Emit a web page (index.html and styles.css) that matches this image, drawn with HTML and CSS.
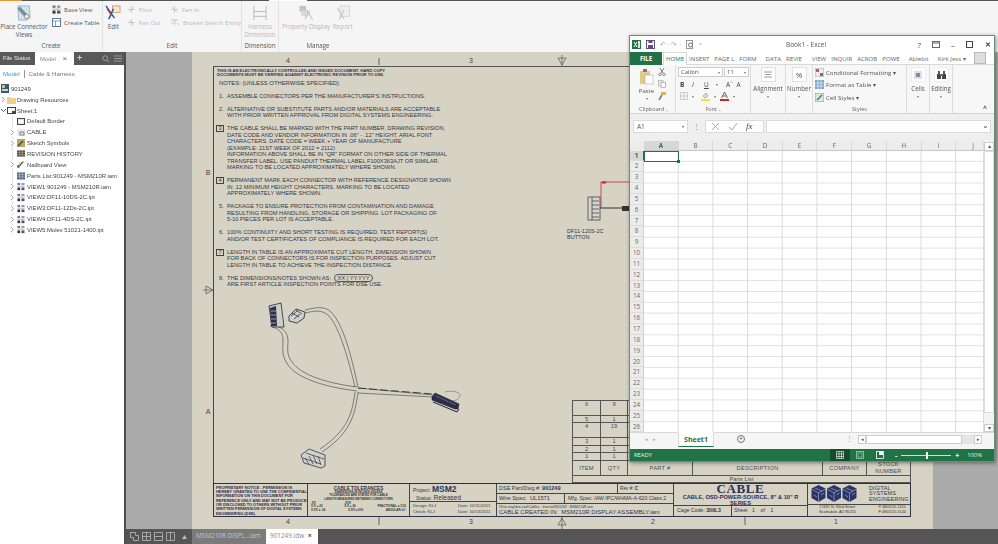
FILE: index.html
```html
<!DOCTYPE html>
<html lang="en">
<head>
<meta charset="utf-8">
<title>901249.idw</title>
<link rel="stylesheet" href="styles.css">
</head>
<body>
<svg class="defs" width="0" height="0">
  <symbol id="view" viewBox="0 0 9 9"><rect x="0.5" y="0.5" width="3" height="2.4" fill="#778"/><rect x="5" y="0.5" width="3.4" height="2.4" fill="#99a"/><rect x="0.5" y="3.6" width="8" height="1.2" fill="#bbc"/><rect x="0.5" y="5.6" width="3" height="3" fill="#334"/><rect x="5" y="5.6" width="3.4" height="3" fill="#556"/></symbol>
  <symbol id="chev" viewBox="0 0 5 7"><path d="M1 1l2.5 2.5L1 6" fill="none" stroke="#999" stroke-width=".9"/></symbol>
</svg>
<div class="app">
  <div class="topline"><i class="tl-orange"></i><i class="tl-dark a"></i><i class="tl-white"></i><i class="tl-dark b"></i></div>
  <header class="ribbon">
    <section class="rgroup create">
      <div class="rbody">
        <div class="bigbtn place">
          <svg width="16" height="16" viewBox="0 0 18 18"><path d="M2 1h13l1 13-4 3H3z" fill="#cfe3ea" stroke="#6fa0b0" stroke-width=".7"/><path d="M3 3l9 10" stroke="#7f8a90" stroke-width="4"/><circle cx="12" cy="13" r="2.6" fill="#eee" stroke="#666" stroke-width=".7"/></svg>
          <span>Place Connector<br>Views</span>
        </div>
        <div class="rstack">
          <div class="smallbtn"><svg width="9" height="9"><use href="#view"/></svg><span>Base View</span></div>
          <div class="smallbtn"><svg width="9" height="9" viewBox="0 0 9 9"><rect x=".5" y=".5" width="8" height="8" fill="#fff" stroke="#5b7a94"/><path d="M.5 3h8M3.5 3v5.5" stroke="#5b7a94" stroke-width=".7"/></svg><span>Create Table</span></div>
        </div>
      </div>
      <footer>Create</footer>
    </section>
    <section class="rgroup edit">
      <div class="rbody">
        <div class="bigbtn editbtn">
          <svg width="16" height="16" viewBox="0 0 17 17"><rect x="8" y="1" width="8" height="7" fill="#f1e6d0" stroke="#c2955a" stroke-width=".8"/><path d="M1 1l9 13M9 4l-5 11" stroke="#2f55a5" stroke-width="1.6"/><path d="M2 4l5 7" stroke="#c83a30" stroke-width="1.2"/></svg>
          <span>Edit</span>
        </div>
        <div class="rstack off">
          <div class="smallbtn"><svg width="9" height="9" viewBox="0 0 9 9"><path d="M4.5 1v7M1 4.5h7M2 7l5-5" stroke="#bbb" stroke-width=".7"/></svg><span>Pivot</span></div>
          <div class="smallbtn"><svg width="9" height="9" viewBox="0 0 9 9"><path d="M4.5 1v7M1 4.5h7M2 2l5 5" stroke="#bbb" stroke-width=".7"/></svg><span>Fan Out</span></div>
        </div>
        <div class="rstack off second">
          <div class="smallbtn"><svg width="9" height="9" viewBox="0 0 9 9"><path d="M4.5 1v7M1 4.5h7M2 2l2 2M7 7L5 5" stroke="#bbb" stroke-width=".7"/></svg><span>Fan In</span></div>
          <div class="smallbtn"><svg width="10" height="9" viewBox="0 0 10 9"><path d="M1 2h7M5 2v5M1 5h3M7 5l2 2" stroke="#bbb" stroke-width=".8"/></svg><span>Broken Sketch Entity</span></div>
        </div>
      </div>
      <footer>Edit</footer>
    </section>
    <section class="rgroup dimension">
      <div class="rbody">
        <div class="bigbtn off">
          <svg width="16" height="16" viewBox="0 0 17 17"><path d="M2 1v15M15 1v15M2 7h13M2 12h13" stroke="#a8a8a8" fill="none" stroke-width=".8"/></svg>
          <span>Harness<br>Dimension</span>
        </div>
      </div>
      <footer>Dimension</footer>
    </section>
    <section class="rgroup manage">
      <div class="rbody">
        <div class="bigbtn off prop">
          <svg width="16" height="16" viewBox="0 0 16 17"><rect x="1" y="1" width="7" height="6" fill="#c4c4c4"/><rect x="3" y="6" width="7" height="6" fill="#d8d8d8"/><path d="M9 5l6 11M7 15l5-9" stroke="#b5b5b5"/></svg>
          <span>Property Display</span>
        </div>
        <div class="bigbtn off">
          <svg width="16" height="16" viewBox="0 0 16 17"><rect x="5" y="1" width="10" height="11" fill="#eee" stroke="#ccc" stroke-width=".7"/><path d="M2 3l7 12M9 5l-5 11" stroke="#bbb"/></svg>
          <span>Report</span>
        </div>
      </div>
      <footer>Manage</footer>
    </section>
  </header>

  <div class="main">
    <aside class="browser">
      <div class="ptabs">
        <span class="ptab dark">File Status</span>
        <span class="ptab active">Model <b>×</b></span>
        <span class="ptab plus">+</span>
        <span class="ptools"><svg width="8" height="8" viewBox="0 0 8 8"><circle cx="3.2" cy="3.2" r="2.4" fill="none" stroke="#aaa" stroke-width=".8"/><path d="M5 5l2.5 2.5" stroke="#aaa" stroke-width=".8"/></svg><svg width="8" height="7" viewBox="0 0 8 7"><path d="M0 1h8M0 3.5h8M0 6h8" stroke="#aaa" stroke-width=".8"/></svg></span>
      </div>
      <div class="pswitch"><span class="blue">Model</span><i></i><span>Cable &amp; Harness</span></div>
      <ul class="tree">
        <li class="l0"><svg class="ic" width="8" height="9" viewBox="0 0 8 9"><rect width="8" height="9" fill="#3c5a72"/><rect x="1" y="1" width="3" height="3" fill="#d7c06a"/><rect x="1" y="5" width="6" height="2" fill="#c9d4dc"/></svg>901249</li>
        <li class="l1"><svg class="chev" width="5" height="7"><use href="#chev"/></svg><svg class="ic" width="9" height="8" viewBox="0 0 9 8"><path d="M0 1h3l1 1h5v6H0z" fill="#efd08a"/></svg>Drawing Resources</li>
        <li class="l1"><svg class="chev" width="5" height="7" viewBox="0 0 5 7"><path d="M0 2l2.5 2.5L5 2" fill="none" stroke="#444" stroke-width=".9"/></svg><svg class="ic" width="9" height="7" viewBox="0 0 9 7"><rect x=".5" y=".5" width="8" height="6" fill="#fff" stroke="#345"/><rect x="5" y="4" width="3" height="2" fill="#345"/></svg>Sheet:1</li>
        <li class="l2"><svg class="ic" width="8" height="7" viewBox="0 0 8 7"><rect x=".5" y=".5" width="7" height="6" fill="#e4e4e4" stroke="#444"/><rect x="2" y="2" width="4" height="3" fill="#fff"/></svg>Default Border</li>
        <li class="l2 arrow"><svg class="chev" width="5" height="7"><use href="#chev"/></svg><svg class="ic" width="8" height="7" viewBox="0 0 8 7"><rect width="8" height="7" fill="#e8ebee"/><rect x="3" y="3" width="4" height="3" fill="none" stroke="#556" stroke-width=".7"/></svg>CABLE</li>
        <li class="l2 arrow"><svg class="chev" width="5" height="7"><use href="#chev"/></svg><svg class="ic" width="8" height="8" viewBox="0 0 8 8"><rect width="8" height="8" fill="#b9a66e"/><path d="M1 7l5-5" stroke="#5c4a1c" stroke-width="1.4"/></svg>Sketch Symbols</li>
        <li class="l2"><svg class="ic" width="8" height="7" viewBox="0 0 9 7"><rect width="9" height="7" fill="#555"/><path d="M0 2.3h9M0 4.6h9M3 0v7M6 0v7" stroke="#c9b98d" stroke-width=".5"/></svg>REVISION HISTORY</li>
        <li class="l2 arrow"><svg class="chev" width="5" height="7"><use href="#chev"/></svg><svg class="ic" width="8" height="9" viewBox="0 0 9 9"><path d="M1 8l6-7" stroke="#445" stroke-width="1.6"/><path d="M6 1l2 2M2 3h2" stroke="#e3c23a" stroke-width="1.4"/><rect y="5" width="3" height="3" fill="#5b83b5"/></svg>Nailboard View</li>
        <li class="l2"><svg class="ic" width="8" height="8" viewBox="0 0 9 8"><rect width="9" height="8" fill="#4e6b86"/><path d="M0 2.5h9M0 5h9M3 0v8M6 0v8" stroke="#dfe6ec" stroke-width=".5"/></svg>Parts List:901249 - MSM210R.iam</li>
        <li class="l2 arrow"><svg class="chev" width="5" height="7"><use href="#chev"/></svg><svg class="ic" width="8" height="9"><use href="#view"/></svg>VIEW1:901249 - MSM210R.iam</li>
        <li class="l2 arrow"><svg class="chev" width="5" height="7"><use href="#chev"/></svg><svg class="ic" width="8" height="9"><use href="#view"/></svg>VIEW2:DF11-10DS-2C.ipt</li>
        <li class="l2 arrow"><svg class="chev" width="5" height="7"><use href="#chev"/></svg><svg class="ic" width="8" height="9"><use href="#view"/></svg>VIEW3:DF11-12Ds-2C.ipt</li>
        <li class="l2 arrow"><svg class="chev" width="5" height="7"><use href="#chev"/></svg><svg class="ic" width="8" height="9"><use href="#view"/></svg>VIEW4:DF11-4DS-2C.ipt</li>
        <li class="l2 arrow"><svg class="chev" width="5" height="7"><use href="#chev"/></svg><svg class="ic" width="8" height="9"><use href="#view"/></svg>VIEW5:Molex 51021-1400.ipt</li>
      </ul>
    </aside>

    <div class="workspace">
      <div class="canvas">
        <div class="paper">
          <svg class="art" viewBox="192 52 741 477" width="741" height="477">
            <g class="zones">
              <text x="288" y="63">4</text><text x="471" y="63">3</text>
              <text x="288" y="524">4</text><text x="471" y="524">3</text><text x="653" y="524">2</text><text x="836" y="524">1</text>
              <text x="208" y="175">B</text><text x="208" y="414">A</text>
            </g>
            <path d="M379 58v7M379 517v8M745 517v8" stroke="#444" stroke-width=".8"/>
            <g fill="none" stroke="#555" stroke-width=".7">
              <path d="M562 55v11M558 58h8l-4 7zM562 516v13M558 525h8l-4-7zM203 290h11M206 286v8l7-4z"/>
            </g>
            <!-- cable harness -->
            <g fill="none" stroke="#55554f" stroke-width=".7">
              <path d="M274 325c10 3 14 8 14 16 0 7-2 13 4 21 9 13 34 21 65 25"/>
              <path d="M270 326c10 3 13 7 13 14 0 9-2 15 5 25 9 13 36 22 69 26"/>
              <path d="M305 310c9-2 19-5 26 2 13 13 21 47 27 75"/>
              <path d="M305 313c9-2 17-4 24 3 11 12 20 46 26 71"/>
              <path d="M358 392c-3 25-9 42-36 60"/>
              <path d="M355 392c-3 23-8 39-35 57"/>
              <path d="M358 388l75 7M358 393l75 4"/>
            </g>
            <path d="M358 388l75 6" fill="none" stroke="#222" stroke-width=".8" stroke-dasharray="8 3"/>
            <path d="M445 392c8-2 14 0 15 3 0 3-4 6-8 6" fill="none" stroke="#777" stroke-width=".7"/>
            <g class="conn">
              <path d="M269 306l12-3 3 24-12 0z" fill="#d0cfc6" stroke="#223" stroke-width=".8"/>
              <path d="M270 308l6-2 1 20-6 0z" fill="#2c3050"/>
              <path d="M271 311h5M271 315h5M271 319h5M271 323h5M278 310h4M278 314h4M278 318h5M278 322h5" stroke="#ccc" stroke-width=".7"/>
              <path d="M289 316l7-7 9 3-1 6-7 5-8-2z" fill="#cfd0cc" stroke="#223" stroke-width=".8"/>
              <path d="M291 316l6-5M294 319l6-5M292 313l7 4M296 310l6 4" stroke="#223" stroke-width=".7"/>
              <path d="M432 397l3-4 24 11-1 5-3 0-23-9z" fill="#2a2c48" stroke="#1c1e33" stroke-width=".6"/>
              <path d="M436 396l20 9" stroke="#cdd" stroke-width=".6" stroke-dasharray="1.4 1"/>
              <path d="M433 402l24 10 2-3" fill="none" stroke="#223" stroke-width="1"/>
              <path d="M301 455l8-6 16 6v11l-4 2-17-5z" fill="#d2d2cc" stroke="#334" stroke-width=".8"/>
              <path d="M305 458l4 6M309 456l4 8M313 455l4 9M318 456l3 9M303 458l18 6M306 453l18 6" stroke="#334" stroke-width=".7"/>
            </g>
            <!-- button connector -->
            <g>
              <path d="M601 208v-26h28" fill="none" stroke="#d8323a" stroke-width=".9"/>
              <rect x="602" y="181.5" width="4" height="2" fill="#d02030"/>
              <path d="M600 208h22" stroke="#333" stroke-width="1"/>
              <rect x="622" y="206" width="7" height="5" fill="#333"/>
              <rect x="588" y="197" width="12" height="23" fill="#d8d6cb" stroke="#445" stroke-width=".8"/>
              <path d="M592 197v23M592 201h7M592 205h7M592 209h7M592 213h7M592 217h7" stroke="#445" stroke-width=".8"/>
            </g>
          </svg>

          <div class="frame">
            <div class="notes">
              <p class="warn">THIS IS AN ELECTRONICALLY CONTROLLED AND ISSUED DOCUMENT. HARD COPY<br>DOCUMENTS MUST BE VERIFIED AGAINST ELECTRONIC REVISION PRIOR TO USE.</p>
              <p class="nhead">NOTES: (UNLESS OTHERWISE SPECIFIED)</p>
              <div class="note"><span class="n">1.</span><p>ASSEMBLE CONNECTORS PER THE MANUFACTURER'S INSTRUCTIONS.</p></div>
              <div class="note"><span class="n">2.</span><p>ALTERNATIVE OR SUBSTITUTE PARTS AND/OR MATERIALS ARE ACCEPTABLE<br>WITH PRIOR WRITTEN APPROVAL FROM DIGITAL SYSTEMS ENGINEERING.</p></div>
              <div class="note"><span class="n box">3</span><p>THE CABLE SHALL BE MARKED WITH THE PART NUMBER, DRAWING REVISION,<br>DATE CODE AND VENDOR INFORMATION IN .06" - .12" HEIGHT, ARIAL FONT<br>CHARACTERS. DATE CODE = WEEK + YEAR OF MANUFACTURE<br>(EXAMPLE: 21ST WEEK OF 2012 = 2112)<br>INFORMATION ABOVE SHALL BE IN "QR" FORMAT ON OTHER SIDE OF THERMAL<br>TRANSFER LABEL. USE PANDUIT THERMAL LABEL F100X363AJT OR SIMILAR.<br>MARKING TO BE LOCATED APPROXIMATELY WHERE SHOWN.</p></div>
              <div class="note"><span class="n box">4</span><p>PERMANENT MARK EACH CONNECTOR WITH REFERENCE DESIGNATOR SHOWN<br>IN .12 MINIMUM HEIGHT CHARACTERS. MARKING TO BE LOCATED<br>APPROXIMATELY WHERE SHOWN.</p></div>
              <div class="note"><span class="n">5.</span><p>PACKAGE TO ENSURE PROTECTION FROM CONTAMINATION AND DAMAGE<br>RESULTING FROM HANDLING, STORAGE OR SHIPPING. LOT PACKAGING OF<br>5-10 PIECES PER LOT IS ACCEPTABLE.</p></div>
              <div class="note"><span class="n">6.</span><p>100% CONTINUITY AND SHORT TESTING IS REQUIRED. TEST REPORT(S)<br>AND/OR TEST CERTIFICATES OF COMPLIANCE IS REQUIRED FOR EACH LOT.</p></div>
              <div class="note"><span class="n box">7</span><p>LENGTH IN TABLE IS AN APPROXIMATE CUT LENGTH. DIMENSION SHOWN<br>FOR BACK OF CONNECTORS IS FOR INSPECTION PURPOSES. ADJUST CUT<br>LENGTH IN TABLE TO ACHIEVE THE INSPECTION DISTANCE.</p></div>
              <div class="note"><span class="n">8.</span><p>THE DIMENSIONS/NOTES SHOWN AS: <span class="oval">XX | YY.YYY</span><br>ARE FIRST ARTICLE INSPECTION POINTS FOR DSE USE.</p></div>
            </div>
            <div class="btnlabel">DF11-120S-2C<br>BUTTON</div>

            <div class="spacer"></div>
            <table class="parts">
              <colgroup><col class="c1"><col class="c2"><col class="c3"><col class="c4"><col class="c5"><col class="c6"></colgroup>
              <tr class="r15"><td>6</td><td>9</td><td></td><td></td><td></td><td></td></tr>
              <tr class="r7"><td>5</td><td>1</td><td></td><td></td><td></td><td></td></tr>
              <tr class="r15"><td>4</td><td>19</td><td></td><td></td><td></td><td></td></tr>
              <tr class="r8"><td>3</td><td>1</td><td></td><td></td><td></td><td></td></tr>
              <tr class="r7"><td>2</td><td>1</td><td></td><td></td><td></td><td></td></tr>
              <tr class="r8"><td>1</td><td>1</td><td></td><td></td><td></td><td></td></tr>
              <tr class="r15 thead"><td>ITEM</td><td>QTY</td><td>PART #</td><td>DESCRIPTION</td><td>COMPANY</td><td>STOCK<br>NUMBER</td></tr>
              <tr class="r7"><td colspan="6">Parts List</td></tr>
            </table>
            <div class="title">
              <div class="tb tb1">PROPRIETARY NOTICE - PERMISSION IS<br>HEREBY GRANTED TO USE THE CONFIDENTIAL<br>INFORMATION ON THIS DOCUMENT FOR<br>REFERENCE ONLY AND MAY NOT BE PRODUCED<br>OR DISCLOSED TO OTHERS WITHOUT PRIOR<br>WRITTEN PERMISSION OF DIGITAL SYSTEMS<br>ENGINEERING (DSE).</div>
              <div class="tb tb2">
                <strong>CABLE TOLERANCES</strong>
                <small>DIMENSIONS IN INCHES UNLESS<br>TOLERANCES ARE STATED FOR CABLE<br>LENGTH MEASURED BETWEEN CONNECTORS</small>
                <small class="cols"><span>.XX<br>X.X +.25</span><span>.XXX<br>X.X +.06</span><span>FRACTIONAL ± 1/32</span></small>
                <small class="cols"><span>X.XX ± .06</span><span>X.XX ±.030</span><span>ANGULAR ±1°</span></small>
              </div>
              <div class="tb tb3">
                <div class="prj"><p>Project: <b>MSM2</b></p><p class="st">Status: <em>Released</em></p></div>
                <div class="dsg"><span>Design: KLJ</span><span>Date: 10/11/2011</span><span>Check: KLJ</span><span>Date: 10/13/2011</span></div>
              </div>
              <div class="tb tb4">
                <div class="row a"><span>DSE Part/Dwg #: <b>901249</b></span><span class="rev">Rev #: <b>C</b></span></div>
                <div class="row b"><span class="ws">Wire Spec: &nbsp;UL1571</span><span>Mfg. Spec: IAW IPC/WHMA-A-620 Class 2</span></div>
                <div class="row c"><small>\\Dse.eng\dse-cad\Cables - Internal\901249 - MSM210R.iam</small><span>CABLE CREATED IN: &nbsp;MSM210R DISPLAY ASSEMBLY.iam</span></div>
              </div>
              <div class="tb tb5">
                <div class="big">CABLE</div>
                <div class="sub">CABLE, OSD-POWER-SOURCE, 8" &amp; 10" R<br>SERIES</div>
                <div class="cage"><span>Cage Code: <b>309L3</b></span><span class="sh">Sheet &nbsp; 1 &nbsp;&nbsp; of &nbsp;&nbsp; 1</span></div>
              </div>
              <div class="tb tb6">
                <div class="logo">
                  <svg width="46" height="17" viewBox="0 0 46 17">
                    <g id="die"><path d="M7.5 0l7 3.5v9.5l-7 4-7-4V3.500z" fill="#2b3468"/><path d="M.5 4l7 4 7-4M7.5 8v9M4 3l7 3M3 10l3 2M10 10l3-2" stroke="#b7bbd0" stroke-width=".6" fill="none"/></g>
                    <use href="#die" x="15.500"/><use href="#die" x="31"/>
                  </svg>
                  <span>DIGITAL<br>SYSTEMS<br>ENGINEERING</span>
                </div>
                <div class="addr"><span>17491 N. 93rd Street<br>Scottsdale, AZ 85255</span><span>P:480/515-1110<br>F:480/515-0144</span></div>
              </div>
            </div>
          </div>
        </div>
      </div>
      <div class="docbar">
        <div class="docicons">
          <svg width="9" height="9" viewBox="0 0 9 9"><path d="M.5.500h5v3h3v5h-5v-3h-3z" fill="none" stroke="#bbb" stroke-width=".8"/></svg>
          <svg width="9" height="9" viewBox="0 0 9 9"><path d="M.5.500h8v8h-8zM4.500.500v8M.5 4.500h8" fill="none" stroke="#bbb" stroke-width=".8"/></svg>
          <svg width="9" height="9" viewBox="0 0 9 9"><path d="M.5.500h8v8h-8zM.5 4.500h8" fill="none" stroke="#bbb" stroke-width=".8"/></svg>
          <svg width="9" height="9" viewBox="0 0 9 9"><path d="M.5.500h8v8h-8zM4.500.500v8" fill="none" stroke="#bbb" stroke-width=".8"/></svg>
          <svg class="up" width="5" height="4" viewBox="0 0 5 4"><path d="M2.500 0L5 4H0z" fill="#bbb"/></svg>
        </div>
        <span class="doc">MSM210R DISPL...iam</span>
        <span class="doc cur">901249.idw <b>×</b></span>
      </div>
    </div>
  </div>

  <div class="excel">
    <div class="xtitle">
      <svg width="9" height="9" viewBox="0 0 9 9"><rect width="9" height="9" fill="#1f7244"/><path d="M2 2l3 5M5 2L2 7" stroke="#fff" stroke-width="1"/><rect x="6" y="1" width="2" height="7" fill="#d7eadf"/></svg>
      <svg width="9" height="9" viewBox="0 0 9 9"><rect x=".5" y=".5" width="8" height="8" fill="none" stroke="#5c4f80"/><rect x="2" y="5" width="5" height="3.500" fill="#5c4f80"/><rect x="2.500" y="1" width="4" height="2" fill="#5c4f80"/></svg>
      <span class="qa">↶ · ↷ ·</span>
      <svg width="8" height="9" viewBox="0 0 8 9"><rect x=".5" y=".5" width="6" height="8" fill="#fff" stroke="#999"/><circle cx="4.500" cy="5" r="2" fill="none" stroke="#678"/></svg>
      <span class="qa">⁼</span>
      <span class="xname">Book1 - Excel</span>
      <span class="winbtns"><span>?</span><svg width="8" height="7" viewBox="0 0 8 7"><rect x=".5" y=".5" width="7" height="6" fill="none" stroke="#666"/><path d="M.5 2h7" stroke="#666"/></svg><span>–</span><svg width="7" height="7" viewBox="0 0 7 7"><rect x=".5" y=".5" width="6" height="6" fill="none" stroke="#444"/></svg><span class="cl">✕</span></span>
    </div>
    <nav class="xtabs">
      <span class="file">FILE</span><span class="home">HOME</span><span>INSERT</span><span>PAGE L</span><span>FORM</span><span class="data">DATA</span><span>REVIE</span><span class="vw-tab">VIEW</span><span>INQUIR</span><span>ACROB</span><span>POWE</span><span class="able">Ablebit</span><span class="user">Kirk Jess ▾</span><i class="avatar"></i>
    </nav>
    <div class="xribbon">
      <section class="xg clip">
        <div class="xgb">
          <div class="paste">
            <svg width="15" height="17" viewBox="0 0 15 17"><rect x="1" y="3" width="10" height="13" fill="#e3c890"/><rect x="4" y="1" width="4" height="3" fill="#8a7a5a"/><rect x="6" y="7" width="8" height="9" fill="#fff" stroke="#aaa" stroke-width=".6"/></svg>
            <span>Paste</span><em>▾</em>
          </div>
          <div class="cc">
            <svg width="8" height="8" viewBox="0 0 8 8"><path d="M2 0l3 5M6 0L3 5" stroke="#667" stroke-width=".8"/><circle cx="2" cy="6.500" r="1.300" fill="none" stroke="#667" stroke-width=".7"/><circle cx="6" cy="6.500" r="1.300" fill="none" stroke="#667" stroke-width=".7"/></svg>
            <svg width="8" height="8" viewBox="0 0 8 8"><rect x=".5" y=".5" width="4.500" height="5.500" fill="#eee" stroke="#aaa" stroke-width=".7"/><rect x="3" y="2.500" width="4.500" height="5" fill="#fff" stroke="#99a" stroke-width=".7"/></svg>
            <svg width="8" height="8" viewBox="0 0 8 8"><rect x="3" y="0" width="5" height="3" fill="#d5b65e"/><path d="M4 3L1 8" stroke="#777" stroke-width="1.500"/></svg>
          </div>
        </div>
        <footer>Clipboard <small>⌞</small></footer>
      </section>
      <section class="xg font">
        <div class="xgb">
          <div class="frow"><span class="fbox fn">Calibri <em>▾</em></span><span class="fbox fs">11 <em>▾</em></span></div>
          <div class="frow fmt"><b>B</b><i>I</i><u>U</u><em>▾</em><span class="sp">A<sup>^</sup></span><span>A<sup>ˇ</sup></span></div>
          <div class="frow fmt"><svg width="8" height="8" viewBox="0 0 8 8"><path d="M.5.500h7v7h-7zM4 .5v7M.5 4h7" fill="none" stroke="#bbb" stroke-width=".7"/></svg><em>▾</em><svg class="sp2" width="9" height="9" viewBox="0 0 9 9"><path d="M2 4l3-3 2 3-3 2z" fill="#ddd" stroke="#777" stroke-width=".5"/><rect y="7" width="9" height="2" fill="#f2e22b"/></svg><em>▾</em><svg width="9" height="9" viewBox="0 0 9 9"><path d="M1.500 6L4.500 0l3 6M3 4h3" fill="none" stroke="#444" stroke-width=".8"/><rect y="7" width="9" height="2" fill="#d3202a"/></svg><em>▾</em></div>
        </div>
        <footer>Font <small>⌞</small></footer>
      </section>
      <section class="xg tall align">
        <div class="bigic"><svg width="8" height="7" viewBox="0 0 8 7"><path d="M0 1h8M1 3.500h6M0 6h8" stroke="#999"/></svg></div>
        <span>Alignment</span><em>▾</em>
      </section>
      <section class="xg tall number">
        <div class="bigic pct">%</div>
        <span>Number</span><em>▾</em>
      </section>
      <section class="xg styles">
        <div class="xgb list">
          <div><svg width="9" height="9" viewBox="0 0 9 9"><rect width="9" height="9" fill="#eee" stroke="#aaa"/><rect x="1" y="1" width="3" height="3" fill="#c55"/><rect x="5" y="5" width="3" height="3" fill="#57a"/></svg>Conditional Formatting ▾</div>
          <div><svg width="9" height="9" viewBox="0 0 9 9"><rect width="9" height="9" fill="#7aa6c9"/><path d="M0 3h9M0 6h9M3 0v9M6 0v9" stroke="#fff" stroke-width=".6"/></svg>Format as Table ▾</div>
          <div><svg width="9" height="9" viewBox="0 0 9 9"><rect width="9" height="9" fill="#dfe8d4" stroke="#7a9"/><path d="M2 7l5-5" stroke="#36a" stroke-width="1.200"/></svg>Cell Styles ▾</div>
        </div>
        <footer>Styles</footer>
      </section>
      <section class="xg tall cells">
        <div class="bigic"><svg width="8" height="8" viewBox="0 0 8 8"><rect width="8" height="8" fill="#dde"/><rect x="2" y="2" width="4" height="4" fill="#889"/></svg></div>
        <span>Cells</span><em>▾</em>
      </section>
      <section class="xg tall editing">
        <div class="bigic"><svg width="9" height="8" viewBox="0 0 9 8"><rect x="0" y="3" width="4" height="5" fill="#444"/><rect x="5" y="3" width="4" height="5" fill="#444"/><rect x="1" y="0" width="2" height="4" fill="#555"/><rect x="6" y="0" width="2" height="4" fill="#555"/><rect x="3" y="3" width="3" height="2" fill="#666"/></svg></div>
        <span>Editing</span><em>▾</em>
      </section>
      <span class="collapse">^</span>
    </div>
    <div class="xformula">
      <span class="namebox">A1 <em>▾</em></span><span class="dots">⋮</span>
      <span class="fxbox"><svg width="9" height="9" viewBox="0 0 9 9"><path d="M1 1l7 7M8 1L1 8" stroke="#aaa"/></svg><svg width="10" height="9" viewBox="0 0 10 9"><path d="M1 5l3 3 5-7" fill="none" stroke="#aaa"/></svg><i>fx</i></span>
      <span class="finput"><em>⌄</em></span>
    </div>
    <div class="xsheet">
      <div class="xcorner"></div>
      <div class="xcols"><span class="on">A</span><span>B</span><span>C</span><span>D</span><span>E</span><span>F</span><span>G</span><span>H</span><span>I</span><span>J</span></div>
      <div class="xvs"><i class="ua">▴</i><i class="thumb"></i><i class="da">▾</i></div>
      <div class="xrows"><span class="on">1</span><span>2</span><span>3</span><span>4</span><span>5</span><span>6</span><span>7</span><span>8</span><span>9</span><span>10</span><span>11</span><span>12</span><span>13</span><span>14</span><span>15</span><span>16</span><span>17</span><span>18</span><span>19</span><span>20</span><span>21</span><span>22</span><span>23</span><span>24</span><span>25</span><span>26</span></div>
      <div class="xcells"><i class="sel"></i></div>
    </div>
    <div class="xtabbar">
      <span class="nav">◂ &nbsp;&nbsp; ▸</span>
      <span class="sheet1">Sheet1</span>
      <span class="addsheet">+</span>
      <span class="tdots">⋮</span>
      <span class="hs"><i class="ar">◂</i><i class="hthumb"></i><i class="ar last">▸</i></span>
    </div>
    <div class="xstatus">
      <span class="ready">READY</span>
      <span class="vw on"><svg width="8" height="8" viewBox="0 0 8 8"><path d="M.5.500h7v7h-7zM3 .5v7M5.500.5v7M.5 3h7M.5 5.500h7" fill="none" stroke="#fff" stroke-width=".6"/></svg></span>
      <span class="vw"><svg width="8" height="8" viewBox="0 0 8 8"><rect x=".5" y=".5" width="7" height="7" fill="none" stroke="#b8d2c4" stroke-width=".7"/><rect x="2" y="2" width="4" height="4" fill="none" stroke="#b8d2c4" stroke-width=".6"/></svg></span>
      <span class="vw"><svg width="8" height="8" viewBox="0 0 8 8"><rect x=".5" y=".5" width="7" height="7" fill="none" stroke="#fff" stroke-width=".8"/><rect x="3" y="0" width="4" height="4" fill="#fff"/></svg></span>
      <span class="zoom"><b>-</b><i class="track"><i class="knob"></i></i><b>+</b></span>
      <span class="pct100">100%</span>
    </div>
  </div>
</div>
</body>
</html>
```

FILE: styles.css
```css
* { box-sizing: border-box; }
html, body { margin: 0; padding: 0; width: 998px; height: 544px; overflow: hidden; background: #fff; }
p { margin: 0; }
ul { margin: 0; padding: 0; list-style: none; }
.defs { position: absolute; }
svg { display: block; flex: none; }

.app { position: relative; width: 998px; height: 544px; display: flex; flex-direction: column; font-family: "Open Sans", "Liberation Sans", sans-serif; color: #444; filter: blur(.3px); }

.topline { height: 1px; display: flex; flex: none; background: #f5f5f5; }
.topline i { display: block; height: 1px; }
.tl-orange { width: 22px; background: #e8963c; }
.tl-dark { background: #555; }
.tl-dark.a { width: 247px; }
.tl-white { width: 38px; background: #fff; }
.tl-dark.b { flex: 1; }

/* Inventor ribbon */
.ribbon { height: 51px; flex: none; background: #f5f5f5; display: flex; }
.rgroup { display: flex; flex-direction: column; border-right: 1px solid #e2e2e2; }
.rgroup footer { height: 11px; margin-bottom: 1px; font-size: 6.200px; line-height: 11px; text-align: center; color: #555; }
.rbody { flex: 1; display: flex; min-height: 0; }
.create { width: 103px; }
.edit { width: 139px; }
.dimension { width: 37px; }
.manage { width: 120px; border-right: 0; }
.manage footer { width: 78px; }
.bigbtn { display: flex; flex-direction: column; align-items: center; font-size: 6.250px; line-height: 8.200px; text-align: center; color: #555; padding-top: 4px; gap: 2px; white-space: nowrap; }
.bigbtn.place { width: 48px; }
.bigbtn.editbtn { width: 22px; margin-left: 1px; }
.dimension .bigbtn { width: 37px; }
.bigbtn.prop { margin-left: 4px; width: 46px; margin-right: 4px; }
.off, .off .smallbtn { color: #b9b9b9; }
.rstack { display: flex; flex-direction: column; gap: 4px; padding-top: 4px; margin-left: 4px; }
.smallbtn { display: flex; align-items: center; gap: 3px; font-size: 6.050px; height: 9px; white-space: nowrap; color: #555; }
.create .rstack { margin-left: 4px; }
.edit .rstack.second { margin-left: 9px; }

.main { flex: 1; min-height: 0; display: flex; }

/* Model browser */
.browser { width: 124px; flex: none; background: #fff; display: flex; flex-direction: column; font-family: "Liberation Sans", sans-serif; }
.ptabs { height: 13px; background: #595959; display: flex; align-items: center; font-size: 5.800px; color: #e8e8e8; }
.ptab { height: 13px; line-height: 13px; display: block; }
.ptab.dark { width: 35px; padding-left: 3px; }
.ptab.active { width: 39px; background: #fff; color: #888; padding-left: 5px; white-space: nowrap; }
.ptab.active b { font-weight: 400; font-size: 8px; margin-left: 5px; color: #666; }
.ptab.plus { width: 22px; padding-left: 3px; font-size: 9px; font-weight: 700; color: #ccc; }
.ptools { display: flex; gap: 4px; align-items: center; margin-left: 6px; }
.pswitch { height: 17px; display: flex; align-items: center; font-size: 6.100px; padding-left: 3px; color: #777; }
.pswitch .blue { color: #3c9ad0; }
.pswitch i { width: 1px; height: 8px; background: #999; margin: 0 4px; }
.tree { padding-top: 1.500px; font-size: 5.900px; color: #444; }
.tree li { height: 10.850px; display: flex; align-items: center; gap: 2px; white-space: nowrap; position: relative; }
.tree .l0 { padding-left: 1px; }
.tree .l1 { padding-left: 1px; gap: 1px; }
.tree .l2 { padding-left: 17px; }
.tree .l2::before { content: ""; position: absolute; left: 12px; top: 0; bottom: 0; border-left: 1px solid #e4e4e4; z-index: 0; }
.tree .l2.arrow { padding-left: 10px; }
.tree .chev { position: relative; z-index: 1; background: #fff; }

/* Workspace */
.workspace { flex: 1; min-width: 0; display: flex; flex-direction: column; border-left: 2px solid #4f4f4f; }
.canvas { flex: 1; min-height: 0; background: #ababab; padding-left: 66px; }
.paper { position: relative; width: 741px; height: 477px; background: #d6d3c5; padding: 14px 0 0 21px; }
.art { position: absolute; left: 0; top: 0; }
.zones text { font: 7px "Liberation Sans", sans-serif; fill: #444; text-anchor: middle; }
.frame { position: relative; width: 698px; height: 451px; border-left: 1px solid #444; border-top: 1px solid #555; display: flex; flex-direction: column; font-family: "Liberation Sans", sans-serif; color: #363644; }
.notes { position: absolute; left: 2px; top: 1.500px; font-size: 5.700px; line-height: 6.500px; white-space: nowrap; }
.warn { font-size: 4.150px; line-height: 4.500px; font-weight: 700; color: #30304a; margin-left: 1px; }
.nhead { font-size: 5.850px; margin: 2px 0 6.500px 3px; line-height: 6.500px; }
.note { display: flex; margin-bottom: 6.500px; }
.note .n { width: 11px; flex: none; padding-left: 3px; }
.note .n.box { width: 8px; height: 7px; padding: 0; margin: 0 3px 0 0; border: 1px solid #444; text-align: center; line-height: 5.500px; }
.oval { border: 1px solid #555; border-radius: 4px; padding: 0 3px; margin-left: 1px; }
.btnlabel { position: absolute; left: 353px; top: 161px; font-size: 5.500px; line-height: 6px; }
.spacer { flex: 1; }
.parts { align-self: flex-end; width: 338px; table-layout: fixed; border-collapse: collapse; font-size: 5.800px; color: #4c4c54; text-align: center; }
.parts td { border: 1px solid #555; padding: 0; line-height: 6px; overflow: hidden; }
.parts .c1 { width: 28px; } .parts .c2 { width: 27px; } .parts .c3 { width: 65px; } .parts .c4 { width: 130px; } .parts .c5 { width: 44px; } .parts .c6 { width: 44px; }
.parts .r15 { height: 15px; } .parts .r15 td { vertical-align: top; }
.parts .r7 { height: 7.500px; } .parts .r8 { height: 7.500px; }
.parts .thead td { vertical-align: middle; font-size: 5.800px; letter-spacing: .2px; }
.parts .thead td:last-child { line-height: 6.300px; }

/* Title block */
.title { flex: none; height: 34px; margin-left: -1px; border: 1px solid #30304a; border-width: 1.500px 1px 1.500px 1px; display: flex; }
.tb { border-right: 1px solid #444; flex: none; min-width: 0; overflow: hidden; }
.tb:last-child { border-right: 0; }
.tb1 { width: 94px; padding: 1.500px 0 0 2px; font-size: 3.900px; line-height: 4.350px; font-weight: 700; color: #2c2c48; white-space: nowrap; }
.tb2 { width: 102px; text-align: center; font-size: 3px; line-height: 3.300px; padding-top: 2px; color: #333; }
.tb2 strong { display: block; font-size: 4.700px; line-height: 5px; color: #30304a; }
.tb2 small { display: block; font-size: 3px; font-weight: 700; }
.tb2 .cols { display: flex; justify-content: space-between; padding: 1px 3px 0; text-align: left; align-items: flex-end; }
.tb3 { width: 87px; display: flex; flex-direction: column; }
.prj { height: 18px; padding: 1px 0 0 3px; font-size: 5.200px; border-bottom: 1px solid #444; }
.prj b { font-size: 8.500px; color: #2f3560; line-height: 8.500px; }
.prj .st { padding-left: 3px; line-height: 7px; }
.prj em { font-style: normal; font-size: 6.500px; }
.dsg { flex: 1; display: grid; grid-template-columns: 45px 1fr; font-size: 4.300px; line-height: 6.500px; padding: 0 0 0 3px; align-content: center; }
.tb4 { width: 177px; display: flex; flex-direction: column; font-size: 5.500px; white-space: nowrap; }
.tb4 .row { display: flex; padding-left: 2px; border-bottom: 1px solid #444; align-items: center; }
.tb4 .row.a { height: 9.500px; justify-content: space-between; }
.tb4 .rev { width: 56px; border-left: 1px solid #444; height: 100%; padding-left: 2px; line-height: 9px; font-size: 4.700px; }
.tb4 b { color: #2f3560; }
.tb4 .row.b { height: 10px; font-size: 5.200px; }
.tb4 .ws { width: 66px; border-right: 1px solid #444; height: 100%; line-height: 9px; margin-right: 3px; font-size: 5.700px; }
.tb4 .row.c { flex: 1; display: block; border: 0; font-size: 6px; line-height: 6px; padding-top: 1px; }
.tb4 .row.c small { display: block; font-size: 3.500px; line-height: 4.200px; }
.tb5 { width: 134px; display: flex; flex-direction: column; position: relative; overflow: visible; }
.big { text-align: center; font: 700 13px/10px "Liberation Serif", serif; letter-spacing: .6px; color: #2b2f58; height: 10px; }
.sub { text-align: center; font-size: 5.700px; font-weight: 700; line-height: 6px; height: 10.500px; color: #2f3058; white-space: nowrap; position: relative; z-index: 1; }
.cage { flex: 1; display: flex; border-top: 1px solid #444; font-size: 5.200px; line-height: 9.500px; white-space: nowrap; }
.cage > span:first-child { width: 58px; padding-left: 3px; border-right: 1px solid #444; }
.cage .sh { padding-left: 2px; }
.tb6 { flex: 1; display: flex; flex-direction: column; }
.logo { height: 20.500px; display: flex; align-items: center; gap: 12px; padding-left: 3px; font-size: 5.500px; line-height: 5.500px; letter-spacing: .1px; border-bottom: 1px solid #444; }
.addr { flex: 1; display: flex; justify-content: space-between; font-size: 3.900px; line-height: 4.500px; padding: .5px 4px 0 11px; color: #333; white-space: nowrap; }

/* Document bar */
.docbar { height: 15px; flex: none; background: #555; display: flex; align-items: stretch; font-size: 6.400px; color: #c6c6c6; }
.docicons { width: 66px; display: flex; gap: 3px; align-items: center; padding-left: 4px; }
.docicons .up { margin-left: 4px; }
.doc { width: 74px; padding-left: 4px; line-height: 14px; background: #7b7b7b; white-space: nowrap; }
.doc.cur { width: 52px; background: #fff; color: #888; }
.doc.cur b { color: #444; font-size: 7px; margin-left: 2px; }

/* Excel window */
.excel { position: absolute; left: 629px; top: 35px; width: 366px; height: 427px; background: #fff; border: 1px solid #6b8f7d; box-shadow: 1px 1px 4px rgba(0,0,0,.45); display: flex; flex-direction: column; font-size: 6.500px; color: #555; overflow: hidden; }
.xtitle { height: 16px; flex: none; display: flex; align-items: center; padding-left: 2px; gap: 5px; background: #fff; position: relative; }
.qa { color: #aaa; font-size: 7px; }
.xname { position: absolute; left: 156px; font-size: 6.500px; }
.winbtns { position: absolute; right: 3px; top: 3px; display: flex; gap: 11px; align-items: center; font-size: 8px; color: #444; }
.winbtns .cl { font-size: 7px; font-weight: 700; margin-left: 1px; }
.xtabs { height: 13px; flex: none; display: flex; align-items: center; gap: 5px; background: #fff; font-size: 6.100px; color: #666; white-space: nowrap; border-bottom: 1px solid #d8d8d8; }
.xtabs .file { width: 32px; height: 13px; line-height: 13px; background: #217346; color: #fff; text-align: center; font-weight: 700; margin-right: -4px; }
.xtabs .home { color: #217346; border: 1px solid #d8d8d8; border-bottom: 0; height: 13px; line-height: 12px; padding: 0 2px; margin-right: -3px; background: #fff; }
.xtabs .data { margin-left: 4px; }
.xtabs .vw-tab { margin-left: 5px; }
.xtabs .able { margin-left: 4px; }
.xtabs .user { margin-left: 4px; }
.avatar { width: 12px; height: 12px; border: 1px solid #bbb; background: #ddd; display: block; margin-left: 3px; }
.xribbon { height: 49px; flex: none; background: #f7f7f7; display: flex; position: relative; border-bottom: 1px solid #d2d2d2; padding-left: 2px; }
.xg { position: relative; border-right: 1px solid #dcdcdc; display: flex; flex-direction: column; }
.xgb { flex: 1; display: flex; min-height: 0; }
.xg footer { height: 8px; text-align: center; font-size: 5.600px; line-height: 7px; color: #666; margin-bottom: -1px; }
.xg small { color: #888; font-size: 5px; }
.xg.clip { width: 44px; }
.paste { width: 24px; padding: 3px 0 0 5px; display: flex; flex-direction: column; align-items: center; font-size: 6px; line-height: 7px; }
.paste svg { margin-bottom: 3px; }
.paste em, .xg em { font-style: normal; font-size: 4px; color: #777; }
.cc { display: flex; flex-direction: column; gap: 4px; padding: 3px 0 0 2px; }
.xg.font { width: 75px; }
.font .xgb { flex-direction: column; padding: 2px 0 0 2px; gap: 2px; }
.frow { display: flex; align-items: center; gap: 1px; height: 10px; }
.fbox { display: flex; justify-content: space-between; align-items: center; height: 10px; border: 1px solid #ccc; background: #fff; font-size: 6px; padding: 0 2px; }
.fn { width: 45px; }
.fs { width: 25px; }
.fmt { gap: 4px; font-size: 6.500px; padding-left: 2px; color: #444; }
.fmt u, .fmt b, .fmt i { width: 8px; }
.fmt sup { font-size: 4px; line-height: 0; }
.fmt .sp { margin-left: 4px; }
.fmt .sp2 { margin-left: 3px; }
.xg.tall { display: flex; flex-direction: column; align-items: center; font-size: 6.200px; line-height: 8px; padding-top: 2px; }
.bigic { width: 15px; height: 15px; background: #fff; border: 1px solid #e2e2e2; margin-bottom: 3px; display: flex; align-items: center; justify-content: center; }
.bigic.pct { font-size: 8px; color: #555; }
.align { width: 35px; }
.number { width: 27px; }
.styles { width: 94px; }
.list { flex-direction: column; gap: 2.500px; padding: 2px 0 0 2px; font-size: 6.100px; white-space: nowrap; color: #555; }
.list > div { display: flex; gap: 2px; align-items: center; height: 10px; }
.cells { width: 23px; }
.editing { width: 23px; }
.xg.tall.cells .bigic, .xg.tall.editing .bigic { border-color: #efefef; }
.collapse { position: absolute; right: 7px; bottom: 0; font-size: 7px; font-weight: 700; color: #555; }
.xformula { height: 27px; flex: none; background: #efefef; display: flex; align-items: center; padding: 2px 3px 5px; }
.namebox { width: 55px; height: 13px; background: #fff; border: 1px solid #dadada; display: flex; justify-content: space-between; align-items: center; padding: 0 3px; font-size: 6.500px; }
.namebox em { font-style: normal; font-size: 4px; }
.dots { width: 17px; text-align: center; color: #777; }
.fxbox { width: 59px; height: 13px; background: #fff; border: 1px solid #dadada; display: flex; align-items: center; gap: 8px; padding-left: 5px; }
.fxbox i { font: italic 9px "Liberation Serif", serif; color: #444; }
.finput { flex: 1; height: 13px; background: #fff; border: 1px solid #dadada; margin-left: 2px; display: flex; justify-content: flex-end; }
.finput em { font-style: normal; font-size: 8px; line-height: 8px; color: #444; margin-right: 1px; }
.xsheet { flex: 1; min-height: 0; display: grid; grid-template-columns: 14px 339px 11px; grid-template-rows: 9.500px 1fr; background: #fff; }
.xcorner { background: #ececec; }
.xcols { display: grid; grid-template-columns: repeat(10, 34.700px); background: #ececec; border-bottom: 1px solid #c8c8c8; font-size: 6.200px; line-height: 9px; color: #666; text-align: center; overflow: hidden; }
.xcols span { border-right: 1px solid #d8d8d8; }
.xcols .on { background: #d7d7d7; color: #217346; border-bottom: 1px solid #217346; font-weight: 700; }
.xvs { grid-row: 1 / 3; grid-column: 3; background: #f3f3f3; display: flex; flex-direction: column; font-size: 6px; color: #555; text-align: center; border-left: 1px solid #ddd; padding-top: 1px; min-height: 0; }
.xvs i { display: block; font-style: normal; }
.xvs .ua { height: 9px; border: 1px solid #ccc; background: #fff; line-height: 7px; }
.xvs .thumb { flex: 1; background: #fff; border: 1px solid #ddd; margin-bottom: 11px; }
.xvs .da { height: 8px; border: 1px solid #ccc; background: #fff; line-height: 6px; }
.xrows { display: flex; flex-direction: column; background: #ececec; font-size: 6.200px; color: #666; text-align: center; min-height: 0; overflow: hidden; }
.xrows span { height: 10.850px; flex: none; line-height: 10px; border-bottom: 1px solid #dcdcdc; border-right: 1px solid #cfcfcf; }
.xrows .on { background: #d7d7d7; color: #217346; font-weight: 700; border-right: 1px solid #217346; }
.xcells { position: relative; background-color: #fff; background-image: linear-gradient(to right, #dcdcdc 1px, transparent 1px), linear-gradient(to bottom, #e2e2e2 1px, transparent 1px); background-size: 34.700px 10.850px; background-position: -1px -1px; overflow: hidden; min-height: 0; }
.sel { position: absolute; left: 0; top: 0; width: 35px; height: 11px; border: 1px solid #217346; }
.sel::after { content: ""; position: absolute; right: -2px; bottom: -2px; width: 3px; height: 3px; background: #217346; }
.xtabbar { height: 17px; flex: none; background: #f5f5f5; border-top: 1px solid #d8d8d8; position: relative; }
.nav { position: absolute; left: 15px; top: 3px; color: #aaa; font-size: 5px; }
.sheet1 { position: absolute; left: 48px; top: -1px; width: 36px; height: 15px; background: #fff; border: 1px solid #d8d8d8; border-top-color: #fff; border-bottom: 1px solid #217346; color: #217346; font-weight: 700; font-size: 7px; line-height: 13px; text-align: center; }
.addsheet { position: absolute; left: 107px; top: 2px; width: 8px; height: 8px; border: 1px solid #777; border-radius: 50%; font-size: 7px; line-height: 6px; text-align: center; color: #555; }
.tdots { position: absolute; left: 216px; top: 1px; color: #888; }
.hs { position: absolute; left: 228px; right: 12px; top: 2px; height: 9px; display: flex; background: #e4e4e4; }
.hs i { display: block; font-style: normal; }
.hs .ar { width: 8px; background: #fff; border: 1px solid #ccc; font-size: 5px; line-height: 7px; text-align: center; color: #444; }
.hs .hthumb { width: 96px; background: #fff; border: 1px solid #ccc; }
.hs .last { margin-left: auto; }
.xstatus { height: 12px; flex: none; background: #217346; color: #e8f2ec; display: flex; align-items: center; font-size: 5.800px; position: relative; }
.ready { margin-left: 4px; }
.vw { width: 20px; height: 12px; display: flex; align-items: center; justify-content: center; }
.vw.on { background: #124e2c; margin-left: 178px; }
.zoom { display: flex; align-items: center; gap: 4px; margin-left: 5px; color: #fff; }
.zoom b { font-size: 7px; }
.track { display: block; position: relative; width: 50px; height: 1px; background: #cfe2d7; }
.knob { display: block; position: absolute; left: 25px; top: -3px; width: 2px; height: 7px; background: #fff; }
.pct100 { margin-left: 8px; }
```
